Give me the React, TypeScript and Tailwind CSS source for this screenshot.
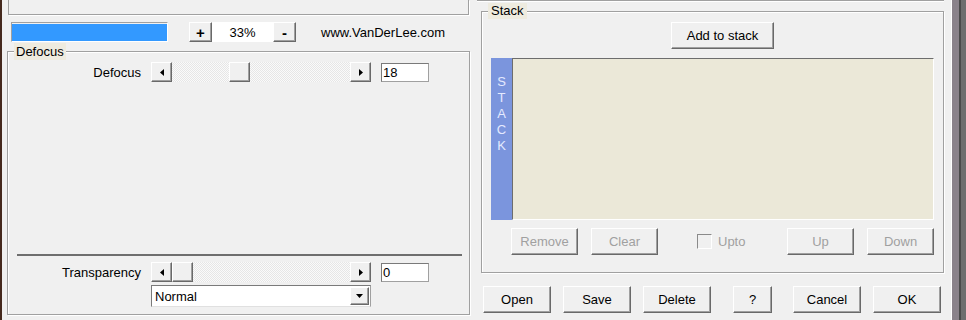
import clsx from "clsx";
import type { ReactNode } from "react";

function Btn({
  children,
  className,
  disabled,
}: {
  children?: ReactNode;
  className?: string;
  disabled?: boolean;
}) {
  return (
    <div
      className={clsx(
        "flex shrink-0 items-center justify-center border border-t-white border-l-white border-r-[#696969] border-b-[#696969] bg-[#f0f0f0] shadow-[inset_-1px_-1px_0_#a0a0a0]",
        disabled ? "text-[#a0a0a0]" : "text-black",
        className
      )}
    >
      {children}
    </div>
  );
}

function Arrow({ dir }: { dir: "left" | "right" | "down" }) {
  if (dir === "left")
    return (
      <svg width="4" height="7" viewBox="0 0 4 7">
        <path d="M4 0 L0 3.5 L4 7 Z" fill="#000" />
      </svg>
    );
  if (dir === "right")
    return (
      <svg width="4" height="7" viewBox="0 0 4 7">
        <path d="M0 0 L4 3.5 L0 7 Z" fill="#000" />
      </svg>
    );
  return (
    <svg width="7" height="4" viewBox="0 0 7 4">
      <path d="M0 0 L7 0 L3.5 4 Z" fill="#000" />
    </svg>
  );
}

function Slider({ thumb }: { thumb: string }) {
  return (
    <div className="flex h-[20px] w-[220px]">
      <Btn className="h-[20px] w-[21px]">
        <Arrow dir="left" />
      </Btn>
      <div className="flex h-[20px] flex-1 bg-[repeating-conic-gradient(#fafafa_0_25%,#e6e6e6_0_50%)] bg-[length:2px_2px]">
        <Btn className={clsx("h-[20px] w-[21px]", thumb)} />
      </div>
      <Btn className="h-[20px] w-[21px]">
        <Arrow dir="right" />
      </Btn>
    </div>
  );
}

function TextBox({ value }: { value: string }) {
  return (
    <div className="flex h-[19px] w-[48px] items-center border border-t-[#7a7a7a] border-l-[#7a7a7a] border-r-[#a0a0a0] border-b-[#a0a0a0] bg-white pl-[1px] leading-[15px]">
      {value}
    </div>
  );
}

export default function App() {
  return (
    <div className="flex h-[320px] w-[966px] overflow-hidden bg-[#f0f0f0] font-['Liberation_Sans',Arial,sans-serif] text-[13px] leading-[15px] text-black">
      {/* left column */}
      <div className="w-[475px] shrink-0 border-l-2 border-[#45291d]">
        <div className="ml-[6px] h-[15px] w-[461px] border-x border-b border-[#a0a0a0] shadow-[1px_1px_0_#fff]" />

        <div className="mt-[7px] flex h-[20px] items-center">
          <div className="ml-[9px] h-[20px] w-[157px] border border-t-[#a0a0a0] border-l-[#a0a0a0] border-r-white border-b-white pt-[1px]">
            <div className="h-full w-full bg-[#3399ff]" />
          </div>
          <Btn className="ml-[21px] h-[20px] w-[23px] text-[15px] font-bold">+</Btn>
          <div className="flex h-[20px] w-[61px] items-center justify-center bg-white">33%</div>
          <Btn className="h-[20px] w-[23px] text-[15px] font-bold">-</Btn>
          <span className="ml-[25px]">www.VanDerLee.com</span>
        </div>

        <fieldset className="ml-[5px] mt-[1px] h-[272px] w-[463px] border border-[#a0a0a0] shadow-[1px_1px_0_#fff,inset_1px_1px_0_#fff]">
          <legend className="ml-[6px] bg-[#eeebdf] px-[2px] leading-[17px]">Defocus</legend>
          <div className="mt-[2px] flex h-[20px] items-center">
            <div className="w-[133px] text-right">Defocus</div>
            <div className="ml-[10px]">
              <Slider thumb="ml-[57px]" />
            </div>
            <div className="ml-[10px]">
              <TextBox value="18" />
            </div>
          </div>

          <div className="ml-[9px] mt-[172px] h-[2px] w-[445px] bg-[#6e6e6e]" />

          <div className="mt-[6px] flex h-[20px] items-center">
            <div className="w-[133px] text-right">Transparency</div>
            <div className="ml-[10px]">
              <Slider thumb="ml-0" />
            </div>
            <div className="ml-[10px]">
              <TextBox value="0" />
            </div>
          </div>

          <div className="ml-[143px] mt-[3px] flex h-[22px] w-[220px] items-center border border-t-[#7a7a7a] border-l-[#7a7a7a] border-r-[#a0a0a0] border-b-[#e0e0e0] bg-white">
            <span className="flex-1 pl-[3px]">Normal</span>
            <Btn className="mr-[1px] h-[18px] w-[19px]">
              <Arrow dir="down" />
            </Btn>
          </div>
        </fieldset>
      </div>

      {/* right column */}
      <div className="w-[476px] shrink-0">
        <div className="ml-[2px] h-[1px] w-[467px] bg-[#a0a0a0]" />
        <div className="ml-[2px] h-[1px] w-[467px] bg-white" />

        <fieldset className="ml-[6px] mt-[1px] h-[270px] w-[463px] border border-[#a0a0a0] shadow-[1px_1px_0_#fff,inset_1px_1px_0_#fff]">
          <legend className="ml-[6px] bg-[#eeebdf] px-[3px] leading-[16px]">Stack</legend>

          <Btn className="ml-[189px] mt-[3px] h-[27px] w-[103px]">Add to stack</Btn>

          <div className="ml-[9px] mt-[9px] flex h-[162px] w-[443px]">
            <div className="flex w-[21px] flex-col items-center bg-[#7b95dd] pt-[16px] leading-[16px] text-[#e4eaff]">
              <span>S</span>
              <span>T</span>
              <span>A</span>
              <span>C</span>
              <span>K</span>
            </div>
            <div className="flex-1 border border-t-[#6d6d6d] border-l-[#6d6d6d] border-r-white border-b-white bg-[#ebe8d8]" />
          </div>

          <div className="mt-[8px] flex h-[27px] items-center">
            <Btn disabled className="ml-[29px] h-[27px] w-[67px]">Remove</Btn>
            <Btn disabled className="ml-[13px] h-[27px] w-[67px]">Clear</Btn>
            <div className="ml-[39px] flex w-[90px] items-center text-[#a0a0a0]">
              <div className="h-[15px] w-[15px] border border-t-[#8a8a8a] border-l-[#8a8a8a] border-r-white border-b-white bg-[#f0f0f0]" />
              <span className="ml-[6px]">Upto</span>
            </div>
            <Btn disabled className="h-[27px] w-[67px]">Up</Btn>
            <Btn disabled className="ml-[13px] h-[27px] w-[67px]">Down</Btn>
          </div>
        </fieldset>

        <div className="mt-[13px] flex h-[27px] items-center">
          <Btn className="ml-[8px] h-[27px] w-[68px]">Open</Btn>
          <Btn className="ml-[12px] h-[27px] w-[68px]">Save</Btn>
          <Btn className="ml-[12px] h-[27px] w-[68px]">Delete</Btn>
          <Btn className="ml-[22px] h-[27px] w-[39px]">?</Btn>
          <Btn className="ml-[21px] h-[27px] w-[68px]">Cancel</Btn>
          <Btn className="ml-[12px] h-[27px] w-[68px]">OK</Btn>
        </div>
      </div>

      {/* window edge */}
      <div className="flex flex-1">
        <div className="w-[1px] bg-white" />
        <div className="w-[7px] bg-[#8a828a]" />
        <div className="w-[2px] bg-[#4a4a4a]" />
        <div className="flex-1 bg-[#6e6e6e]" />
      </div>
    </div>
  );
}
